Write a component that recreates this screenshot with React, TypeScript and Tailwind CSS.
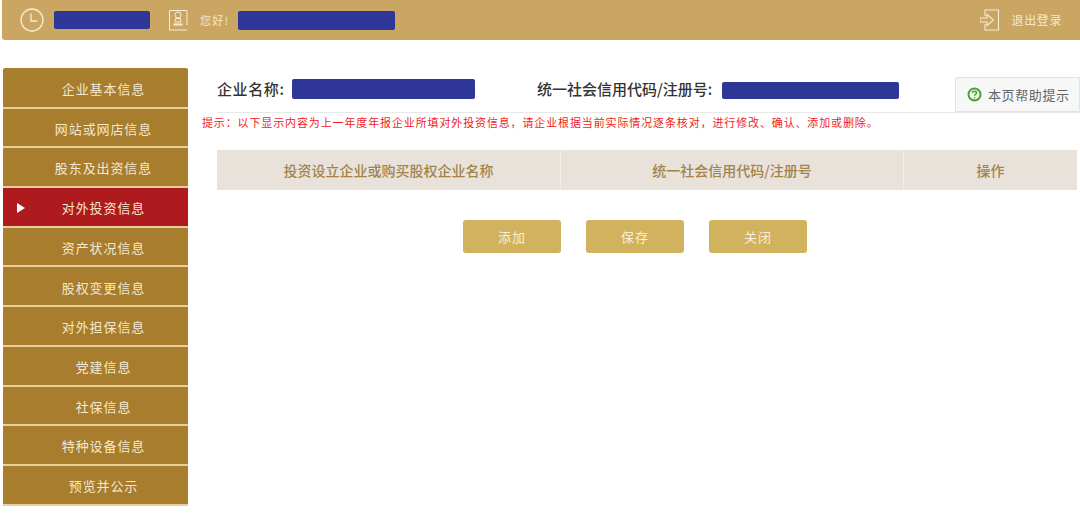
import { ReactNode } from "react";

const MENU = ["企业基本信息", "网站或网店信息", "股东及出资信息", "对外投资信息", "资产状况信息", "股权变更信息", "对外担保信息", "党建信息", "社保信息", "特种设备信息", "预览并公示"];

function Mask(props: { className: string }) {
	return <div className={"bg-[#2e3797] rounded-[2px] " + props.className}></div>;
}

function GoldButton(props: { children: ReactNode }) {
	return <button className="w-[98px] h-[33px] rounded-[3px] bg-[#d1b25f] text-[13px] tracking-[1px] text-[#f5efdc]">{props.children}</button>;
}

function SideMenu() {
	return (
		<div className="w-[185px] shrink-0 flex flex-col rounded-t-[2px] overflow-hidden">
			{MENU.map((m, i) => {
				const active = i === 3;
				return (
					<div key={i} className={"relative h-[39.7px] first:h-[40.7px] flex items-center justify-center pl-[16px] pt-[2px] border-b-2 border-[#e8cf9c] text-[13px] tracking-[0.9px] text-[#f3e8cf] " + (active ? "bg-[#ae1a1e]" : "bg-[#a97d2e]")}>
						{active && <span className="absolute left-[14px] top-[15px] w-0 h-0 border-y-[5px] border-y-transparent border-l-[8px] border-l-white"></span>}
						{m}
					</div>
				);
			})}
		</div>
	);
}

export default function App() {
	return (
		<div className="w-[1080px] h-[531px] overflow-hidden bg-white font-['Noto_Sans_CJK_SC','Liberation_Sans',sans-serif]">
			<div className="ml-[2px] h-[40px] bg-[#cba662] rounded-bl-[3px] flex items-center text-[#f3e8cf]">
				<svg width="26" height="26" viewBox="0 0 26 26" fill="none" stroke="#f6ecd6" strokeWidth="1.3" className="ml-[17px]">
					<circle cx="13" cy="13" r="11" />
					<path d="M12 6.5V14H18.5" />
				</svg>
				<Mask className="ml-[9px] w-[96px] h-[18px]" />
				<svg width="20" height="22" viewBox="0 0 20 22" fill="none" stroke="#f6ecd6" strokeWidth="1" className="ml-[18px]">
					<path d="M19 16V1.5H1.5V21H19" />
					<circle cx="10" cy="6" r="3" />
					<path d="M7.5 9.5H12.5L13 13H7Z" />
					<path d="M5.5 15.5H14.5" strokeWidth="2" />
				</svg>
				<span className="ml-[12px] text-[11px] tracking-[1.2px]">您好!</span>
				<Mask className="ml-[9px] w-[157px] h-[19px]" />
				<div className="ml-auto mr-[18px] flex items-center">
					<svg width="20" height="22" viewBox="0 0 20 22" fill="none" stroke="#f6ecd6" strokeWidth="1.1">
						<path d="M5 7V1H18.5V21H5V15" />
						<path d="M0 9H7V5.5L13.5 11L7 16.5V13H0Z" />
					</svg>
					<span className="ml-[12px] text-[12px] tracking-[0.6px]">退出登录</span>
				</div>
			</div>
			<div className="mt-[28px] ml-[3px] flex">
				<SideMenu />
				<div className="flex-1 min-w-0">
					<div className="relative ml-[29px] h-[45px] border-b border-[#e8e8e8] flex items-start pt-[11px] text-[#333]">
						<span className="text-[15px] leading-[20px] font-medium tracking-[0.6px] w-[75px] whitespace-nowrap">企业名称:</span>
						<Mask className="w-[183px] h-[20px]" />
						<span className="ml-[62px] text-[15px] leading-[20px] font-medium w-[185px] whitespace-nowrap">统一社会信用代码/注册号:</span>
						<Mask className="w-[177px] h-[17px] mt-[3px]" />
						<div className="absolute left-[738px] top-[9px] w-[125px] h-[35px] border border-[#dfe2e6] bg-[#f7f7f7] rounded-tl-[2px] flex items-center pl-[11px] text-[13px] text-[#666]">
							<svg width="15" height="15" viewBox="0 0 15 15" fill="none" stroke="#43a62f" strokeWidth="2">
								<circle cx="7.5" cy="7.5" r="6" />
								<path d="M5.5 6C5.5 3.8 9.5 3.8 9.5 6C9.5 7.3 7.5 7.3 7.5 8.8" strokeWidth="1.5" />
								<path d="M7.5 10.2V11.6" strokeWidth="1.5" />
							</svg>
							<span className="ml-[6px] tracking-[0.6px] whitespace-nowrap">本页帮助提示</span>
						</div>
					</div>
					<p className="ml-[14px] mt-[1px] text-[11px] leading-[16px] tracking-[0.87px] text-[#f01c24] whitespace-nowrap">提示：以下显示内容为上一年度年报企业所填对外投资信息，请企业根据当前实际情况逐条核对，进行修改、确认、添加或删除。</p>
					<div className="ml-[29px] mt-[20px] w-[860px] h-[40px] bg-[#e8e2db] grid grid-cols-[344px_343px_173px] text-[14px] font-medium text-[#a2844a] text-center leading-[40px]">
						<div className="border-r border-[#f1ede8]">投资设立企业或购买股权企业名称</div>
						<div className="border-r border-[#f1ede8]">统一社会信用代码/注册号</div>
						<div>操作</div>
					</div>
					<div className="ml-[275px] mt-[30px] flex gap-[25px]">
						<GoldButton>添加</GoldButton>
						<GoldButton>保存</GoldButton>
						<GoldButton>关闭</GoldButton>
					</div>
				</div>
			</div>
		</div>
	);
}
